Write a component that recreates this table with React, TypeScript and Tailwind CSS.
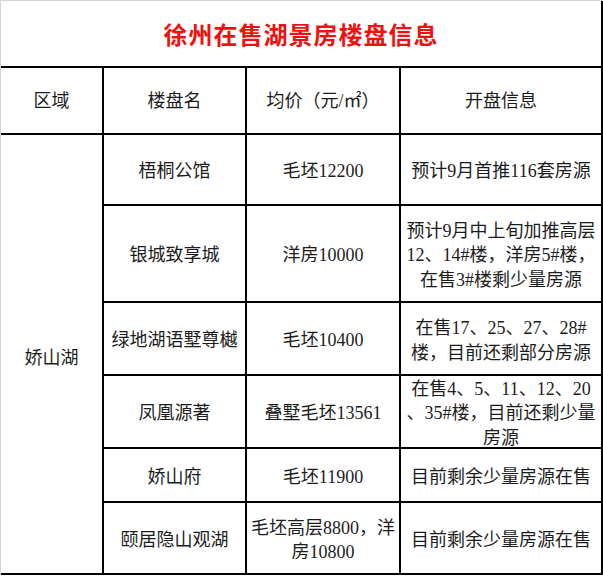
import React from 'react';

// Table of lake-view projects on sale in Xuzhou
const FONT = '"Liberation Serif", "Noto Sans CJK SC", serif';

interface Project {
    name: string;
    price: string[];
    info: string[];
}

const PROJECTS: Project[] = [
    { name: '梧桐公馆', price: ['毛坯12200'], info: ['预计9月首推116套房源'] },
    {
        name: '银城致享城',
        price: ['洋房10000'],
        info: ['预计9月中上旬加推高层', '12、14#楼，洋房5#楼，', '在售3#楼剩少量房源'],
    },
    {
        name: '绿地湖语墅尊樾',
        price: ['毛坯10400'],
        info: ['在售17、25、27、28#', '楼，目前还剩部分房源'],
    },
    {
        name: '凤凰源著',
        price: ['叠墅毛坯13561'],
        info: ['在售4、5、11、12、20', '、35#楼，目前还剩少量', '房源'],
    },
    { name: '娇山府', price: ['毛坯11900'], info: ['目前剩余少量房源在售'] },
    {
        name: '颐居隐山观湖',
        price: ['毛坯高层8800，洋', '房10800'],
        info: ['目前剩余少量房源在售'],
    },
];

function Lines({ lines }: { lines: string[] }) {
    return (
        <div className="text-center leading-[24.5px]">
            {lines.map((l, i) => (
                <div key={i} className="whitespace-nowrap">
                    {l}
                </div>
            ))}
        </div>
    );
}

function Cell({ children, className = '' }: { children: React.ReactNode; className?: string }) {
    return (
        <div className={`flex items-center justify-center bg-white text-[18px] text-[#1c1c1c] ${className}`}>
            {children}
        </div>
    );
}

export default function App() {
    return (
        <div className="w-[603px] h-[576px] bg-white overflow-hidden" style={{ fontFamily: FONT }}>
            <div className="border-l border-t border-[#d4d4d4] w-[603px]">
                <div className="grid w-[602px] grid-cols-[101px_141px_152px_200px] grid-rows-[65px_65px_69px_95px_71px_71px_52px_70px] gap-[2px] bg-black pr-[2px] pb-[2px]">
                    {/* Title */}
                    <div className="col-span-4 flex items-center justify-center bg-white pt-[5px]">
                        <span className="text-[24px] font-bold tracking-[1px] text-[#f01010]">
                            徐州在售湖景房楼盘信息
                        </span>
                    </div>

                    {/* Header */}
                    <Cell className="pt-[1px]">区域</Cell>
                    <Cell className="pt-[1px]">楼盘名</Cell>
                    <Cell className="pt-[1px]">均价（元/㎡）</Cell>
                    <Cell className="pt-[1px]">开盘信息</Cell>

                    {/* Area column spans all rows */}
                    <Cell className="row-span-6 pt-[8px]">娇山湖</Cell>

                    {PROJECTS.map((p) => (
                        <React.Fragment key={p.name}>
                            <Cell className="pt-[4px]">{p.name}</Cell>
                            <Cell className="pt-[4px]">
                                <Lines lines={p.price} />
                            </Cell>
                            <Cell className="pt-[4px]">
                                <Lines lines={p.info} />
                            </Cell>
                        </React.Fragment>
                    ))}
                </div>
            </div>
        </div>
    );
}
